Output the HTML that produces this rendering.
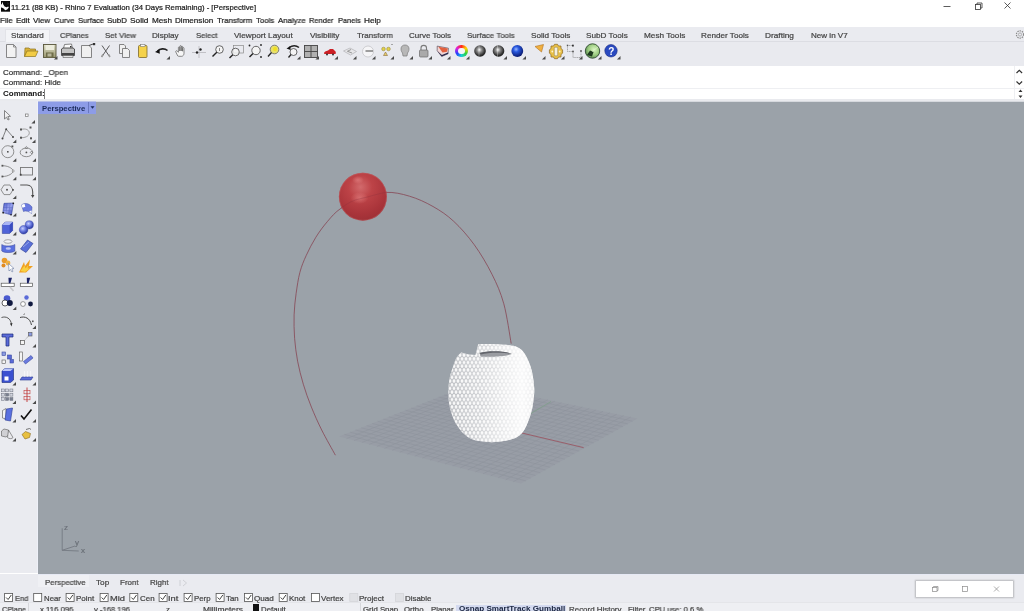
<!DOCTYPE html>
<html><head><meta charset="utf-8"><style>
html,body{margin:0;padding:0;}
body{width:1024px;height:611px;overflow:hidden;position:relative;background:#fff;font-family:"Liberation Sans",sans-serif;}
.t{position:absolute;white-space:nowrap;will-change:transform;-webkit-text-stroke:0.22px currentColor;}
svg{position:absolute;left:0;top:0;}
</style></head><body>
<div style="position:absolute;left:0px;top:0px;width:1024px;height:27px;background:#ffffff;"></div>
<div style="position:absolute;left:0px;top:27px;width:1024px;height:14px;background:#eaebf0;"></div>
<div style="position:absolute;left:0px;top:41px;width:1024px;height:1px;background:#dcdde3;"></div>
<div style="position:absolute;left:0px;top:42px;width:1024px;height:24px;background:#e9eaef;"></div>
<div style="position:absolute;left:0px;top:66px;width:1024px;height:22px;background:#ffffff;"></div>
<div style="position:absolute;left:0px;top:88px;width:1024px;height:1px;background:#eeeff2;"></div>
<div style="position:absolute;left:0px;top:89px;width:1024px;height:10px;background:#ffffff;"></div>
<div style="position:absolute;left:1014px;top:66px;width:1px;height:22px;background:#eeeff2;"></div>
<div style="position:absolute;left:1014px;top:89px;width:1px;height:10px;background:#eeeff2;"></div>
<div style="position:absolute;left:0px;top:101px;width:38px;height:472px;background:#eaebf0;"></div>
<div style="position:absolute;left:38px;top:101px;width:986px;height:473px;background:#9ba2a9;"></div>
<div style="position:absolute;left:0px;top:99px;width:1024px;height:2px;background:#e9eaee;"></div>
<div style="position:absolute;left:38px;top:101px;width:986px;height:1px;background:#d6d9de;"></div>
<div style="position:absolute;left:37px;top:101px;width:1px;height:472px;background:#eef0f8;"></div>
<div style="position:absolute;left:0px;top:574px;width:1024px;height:37px;background:#eaebf0;"></div>
<div style="position:absolute;left:38px;top:574px;width:986px;height:1px;background:#e6e9f4;"></div>
<div style="position:absolute;left:0px;top:602px;width:1024px;height:1px;background:#e4e5e9;"></div>
<div class="t" style="left:11.159151361621278px;top:4.17px;font-size:7.72px;line-height:7.72px;color:#222;transform:scaleX(1.0008);transform-origin:0 0;">11.21 (88 KB) - Rhino 7 Evaluation (34 Days Remaining) - [Perspective]</div>
<div class="t" style="left:0.3718120805369127px;top:17.33px;font-size:8px;line-height:8px;color:#222;transform:scaleX(0.9815);transform-origin:0 0;">File</div>
<div class="t" style="left:15.560975609756097px;top:17.33px;font-size:8px;line-height:8px;color:#222;transform:scaleX(0.9985);transform-origin:0 0;">Edit</div>
<div class="t" style="left:32.8px;top:17.33px;font-size:8px;line-height:8px;color:#222;transform:scaleX(0.9838);transform-origin:0 0;">View</div>
<div class="t" style="left:53.71673151750973px;top:17.33px;font-size:8px;line-height:8px;color:#222;transform:scaleX(0.9582);transform-origin:0 0;">Curve</div>
<div class="t" style="left:77.72089552238805px;top:17.33px;font-size:8px;line-height:8px;color:#222;transform:scaleX(0.9478);transform-origin:0 0;">Surface</div>
<div class="t" style="left:107.40165975103734px;top:17.33px;font-size:8px;line-height:8px;color:#222;transform:scaleX(0.9959);transform-origin:0 0;">SubD</div>
<div class="t" style="left:130.48530805687204px;top:17.33px;font-size:8px;line-height:8px;color:#222;transform:scaleX(1.0367);transform-origin:0 0;">Solid</div>
<div class="t" style="left:152.04608695652172px;top:17.33px;font-size:8px;line-height:8px;color:#222;transform:scaleX(1.0217);transform-origin:0 0;">Mesh</div>
<div class="t" style="left:175.35371179039302px;top:17.33px;font-size:8px;line-height:8px;color:#222;transform:scaleX(1.0098);transform-origin:0 0;">Dimension</div>
<div class="t" style="left:217.1436936936937px;top:17.33px;font-size:8px;line-height:8px;color:#222;transform:scaleX(0.9769);transform-origin:0 0;">Transform</div>
<div class="t" style="left:256.04473684210524px;top:17.33px;font-size:8px;line-height:8px;color:#222;transform:scaleX(0.9704);transform-origin:0 0;">Tools</div>
<div class="t" style="left:278.0px;top:17.33px;font-size:8px;line-height:8px;color:#222;transform:scaleX(0.9758);transform-origin:0 0;">Analyze</div>
<div class="t" style="left:309.3031347962382px;top:17.33px;font-size:8px;line-height:8px;color:#222;transform:scaleX(0.9326);transform-origin:0 0;">Render</div>
<div class="t" style="left:338.0061016949153px;top:17.33px;font-size:8px;line-height:8px;color:#222;transform:scaleX(0.9280);transform-origin:0 0;">Panels</div>
<div class="t" style="left:363.94020618556704px;top:17.33px;font-size:8px;line-height:8px;color:#222;transform:scaleX(1.0309);transform-origin:0 0;">Help</div>
<div style="position:absolute;left:5px;top:29px;width:45px;height:13px;background:#f3f4f7;box-shadow:inset 1px 1px 0 #e2e3e8,inset -1px 0 0 #e2e3e8;"></div>
<div class="t" style="left:10.695177664974619px;top:31.63px;font-size:8px;line-height:8px;color:#444;transform:scaleX(1.0121);transform-origin:0 0;">Standard</div>
<div class="t" style="left:59.62162162162162px;top:31.63px;font-size:8px;line-height:8px;color:#444;transform:scaleX(0.9459);transform-origin:0 0;">CPlanes</div>
<div class="t" style="left:105.10796915167096px;top:31.63px;font-size:8px;line-height:8px;color:#444;transform:scaleX(0.9801);transform-origin:0 0;">Set View</div>
<div class="t" style="left:152.35px;top:31.63px;font-size:8px;line-height:8px;color:#444;transform:scaleX(1.0156);transform-origin:0 0;">Display</div>
<div class="t" style="left:195.6139705882353px;top:31.63px;font-size:8px;line-height:8px;color:#444;transform:scaleX(0.9651);transform-origin:0 0;">Select</div>
<div class="t" style="left:234.4px;top:31.63px;font-size:8px;line-height:8px;color:#444;transform:scaleX(1.0259);transform-origin:0 0;">Viewport Layout</div>
<div class="t" style="left:309.9px;top:31.63px;font-size:8px;line-height:8px;color:#444;transform:scaleX(1.0202);transform-origin:0 0;">Visibility</div>
<div class="t" style="left:356.64144144144143px;top:31.63px;font-size:8px;line-height:8px;color:#444;transform:scaleX(0.9910);transform-origin:0 0;">Transform</div>
<div class="t" style="left:408.8003861003861px;top:31.63px;font-size:8px;line-height:8px;color:#444;transform:scaleX(0.9990);transform-origin:0 0;">Curve Tools</div>
<div class="t" style="left:467.2048657718121px;top:31.63px;font-size:8px;line-height:8px;color:#444;transform:scaleX(0.9878);transform-origin:0 0;">Surface Tools</div>
<div class="t" style="left:531.2917721518987px;top:31.63px;font-size:8px;line-height:8px;color:#444;transform:scaleX(1.0206);transform-origin:0 0;">Solid Tools</div>
<div class="t" style="left:585.9906374501992px;top:31.63px;font-size:8px;line-height:8px;color:#444;transform:scaleX(1.0234);transform-origin:0 0;">SubD Tools</div>
<div class="t" style="left:643.8444219066937px;top:31.63px;font-size:8px;line-height:8px;color:#444;transform:scaleX(1.0243);transform-origin:0 0;">Mesh Tools</div>
<div class="t" style="left:700.9486111111112px;top:31.63px;font-size:8px;line-height:8px;color:#444;transform:scaleX(1.0178);transform-origin:0 0;">Render Tools</div>
<div class="t" style="left:764.8380952380952px;top:31.63px;font-size:8px;line-height:8px;color:#444;transform:scaleX(1.0342);transform-origin:0 0;">Drafting</div>
<div class="t" style="left:810.8553047404063px;top:31.63px;font-size:8px;line-height:8px;color:#444;transform:scaleX(1.0073);transform-origin:0 0;">New in V7</div>
<div class="t" style="left:2.6024844720496896px;top:68.53px;font-size:8px;line-height:8px;color:#333;transform:scaleX(0.9938);transform-origin:0 0;">Command: _Open</div>
<div class="t" style="left:2.5981767180925663px;top:79.23px;font-size:8px;line-height:8px;color:#333;transform:scaleX(1.0046);transform-origin:0 0;">Command: Hide</div>
<div class="t" style="left:2.6825147347740668px;top:90.23px;font-size:8px;line-height:8px;color:#111;font-weight:bold;-webkit-text-stroke:0;transform:scaleX(0.9921);transform-origin:0 0;">Command:</div>
<div style="position:absolute;left:44px;top:89px;width:1px;height:10px;background:#808080;"></div>
<div style="position:absolute;left:38px;top:101px;width:58px;height:1px;background:#b8c0ea;"></div>
<div style="position:absolute;left:38px;top:102px;width:58px;height:12px;background:#8d9ce7;"></div>
<div class="t" style="left:42px;top:104.78px;font-size:7.7px;line-height:7.7px;color:#1a2a5a;font-weight:bold;-webkit-text-stroke:0;">Perspective</div>
<div style="position:absolute;left:88px;top:102px;width:1px;height:11px;background:#6a78c0;"></div>
<div style="position:absolute;left:38px;top:575px;width:51px;height:12px;background:#eff0f4;"></div>
<div class="t" style="left:45.075686274509806px;top:578.53px;font-size:8px;line-height:8px;color:#444;transform:scaleX(0.9755);transform-origin:0 0;">Perspective</div>
<div class="t" style="left:96.03589743589744px;top:578.53px;font-size:8px;line-height:8px;color:#444;transform:scaleX(1.0256);transform-origin:0 0;">Top</div>
<div class="t" style="left:120.16711111111111px;top:578.53px;font-size:8px;line-height:8px;color:#444;transform:scaleX(0.9889);transform-origin:0 0;">Front</div>
<div class="t" style="left:149.5671111111111px;top:578.53px;font-size:8px;line-height:8px;color:#444;transform:scaleX(0.9889);transform-origin:0 0;">Right</div>
<div style="position:absolute;left:455px;top:44.5px;width:12.8px;height:12.8px;border-radius:50%;background:conic-gradient(#ff2a1a,#ffd400 60deg,#2ad040 120deg,#18d0d0 180deg,#2040ff 240deg,#e020e0 300deg,#ff2a1a);"></div>
<div style="position:absolute;left:458px;top:47.5px;width:6.8px;height:6.8px;border-radius:50%;background:#f4f4f8;"></div>
<div class="t" style="left:63.5px;top:522.5px;font-size:8px;color:#6a6f77">z</div>
<div class="t" style="left:74.5px;top:538px;font-size:8px;color:#6a6f77">y</div>
<div class="t" style="left:80.5px;top:545.5px;font-size:8px;color:#6a6f77">x</div>
<div class="t" style="left:15.201226993865031px;top:595.30px;font-size:7.8px;line-height:7.8px;color:#444;transform:scaleX(0.9596);transform-origin:0 0;">End</div>
<div class="t" style="left:43.87391304347826px;top:595.30px;font-size:7.8px;line-height:7.8px;color:#444;transform:scaleX(1.0033);transform-origin:0 0;">Near</div>
<div class="t" style="left:76.1607305936073px;top:595.30px;font-size:7.8px;line-height:7.8px;color:#444;transform:scaleX(1.0245);transform-origin:0 0;">Point</div>
<div class="t" style="left:109.95442176870749px;top:595.30px;font-size:7.8px;line-height:7.8px;color:#444;transform:scaleX(1.1948);transform-origin:0 0;">Mid</div>
<div class="t" style="left:139.60174418604652px;top:595.30px;font-size:7.8px;line-height:7.8px;color:#444;transform:scaleX(1.0212);transform-origin:0 0;">Cen</div>
<div class="t" style="left:168.46237623762377px;top:595.30px;font-size:7.8px;line-height:7.8px;color:#444;transform:scaleX(1.1932);transform-origin:0 0;">Int</div>
<div class="t" style="left:194.076px;top:595.30px;font-size:7.8px;line-height:7.8px;color:#444;transform:scaleX(1.0000);transform-origin:0 0;">Perp</div>
<div class="t" style="left:225.84313725490196px;top:595.30px;font-size:7.8px;line-height:7.8px;color:#444;transform:scaleX(1.0055);transform-origin:0 0;">Tan</div>
<div class="t" style="left:253.89442060085838px;top:595.30px;font-size:7.8px;line-height:7.8px;color:#444;transform:scaleX(1.0399);transform-origin:0 0;">Quad</div>
<div class="t" style="left:289.16649746192894px;top:595.30px;font-size:7.8px;line-height:7.8px;color:#444;transform:scaleX(1.0152);transform-origin:0 0;">Knot</div>
<div class="t" style="left:321.0px;top:595.30px;font-size:7.8px;line-height:7.8px;color:#444;transform:scaleX(1.0229);transform-origin:0 0;">Vertex</div>
<div class="t" style="left:359.05629139072846px;top:595.30px;font-size:7.8px;line-height:7.8px;color:#444;transform:scaleX(1.0316);transform-origin:0 0;">Project</div>
<div class="t" style="left:405.3669781931464px;top:595.30px;font-size:7.8px;line-height:7.8px;color:#444;transform:scaleX(1.0145);transform-origin:0 0;">Disable</div>
<div style="position:absolute;left:0px;top:603px;width:1024px;height:8px;background:#eeeff3;"></div>
<div style="position:absolute;left:28px;top:603px;width:1px;height:8px;background:#d6d7db;"></div>
<div style="position:absolute;left:360px;top:603px;width:1px;height:8px;background:#d6d7db;"></div>
<div style="position:absolute;left:456px;top:604.5px;width:110px;height:6.5px;background:#d4daf0;"></div>
<div class="t" style="left:1.6336477987421383px;top:605.50px;font-size:7.8px;line-height:7.8px;color:#444;transform:scaleX(0.9394);transform-origin:0 0;">CPlane</div>
<div class="t" style="left:39.52276995305164px;top:605.50px;font-size:7.8px;line-height:7.8px;color:#444;transform:scaleX(0.9901);transform-origin:0 0;">x 116.096</div>
<div class="t" style="left:94.3px;top:605.50px;font-size:7.8px;line-height:7.8px;color:#444;transform:scaleX(0.9780);transform-origin:0 0;">y -168.196</div>
<div class="t" style="left:202.8301927194861px;top:605.50px;font-size:7.8px;line-height:7.8px;color:#444;transform:scaleX(1.0734);transform-origin:0 0;">Millimeters</div>
<div class="t" style="left:569.3653905053599px;top:605.50px;font-size:7.8px;line-height:7.8px;color:#444;transform:scaleX(1.0170);transform-origin:0 0;">Record History</div>
<div class="t" style="left:648.6194879089616px;top:605.50px;font-size:7.8px;line-height:7.8px;color:#444;transform:scaleX(0.9757);transform-origin:0 0;">CPU use: 0.6 %</div>
<div class="t" style="left:166px;top:605.50px;font-size:7.8px;line-height:7.8px;color:#444;">z</div>
<div class="t" style="left:261px;top:605.50px;font-size:7.8px;line-height:7.8px;color:#444;">Default</div>
<div class="t" style="left:363px;top:605.50px;font-size:7.8px;line-height:7.8px;color:#444;">Grid Snap</div>
<div class="t" style="left:404px;top:605.50px;font-size:7.8px;line-height:7.8px;color:#444;">Ortho</div>
<div class="t" style="left:431.4px;top:605.50px;font-size:7.8px;line-height:7.8px;color:#444;">Planar</div>
<div class="t" style="left:628px;top:605.50px;font-size:7.8px;line-height:7.8px;color:#444;">Filter</div>
<div style="position:absolute;left:253.3px;top:604px;width:6px;height:7px;background:#111;"></div>
<div class="t" style="left:458.6759415833974px;top:605.41px;font-size:7.9px;line-height:7.9px;color:#1a2540;font-weight:bold;-webkit-text-stroke:0;transform:scaleX(1.0255);transform-origin:0 0;">Osnap SmartTrack Gumball</div>
<div style="position:absolute;left:916px;top:581px;width:97px;height:16px;background:#fff;box-shadow:0 0 1.5px 0.8px rgba(0,0,0,0.22);"></div>
<svg width="1024" height="611" viewBox="0 0 1024 611">
<path d="M6.5 44.5H13.5L16 47V57.5H6.5Z" fill="#f2f2f2" stroke="#7a7a7a" stroke-width="0.9"/><path d="M13.5 44.5V47H16" fill="none" stroke="#7a7a7a" stroke-width="0.8"/>
<path d="M24.5 56.5L25 48H29L30 49H35.5V51" fill="#d9b23a" stroke="#8c7420" stroke-width="0.7"/><path d="M24.5 56.5L27 51H38L35.5 56.5Z" fill="#f2cc45" stroke="#8c7420" stroke-width="0.7"/>
<defs><linearGradient id="flp" x1="0" y1="0" x2="0" y2="1"><stop offset="0" stop-color="#dcdcc4"/><stop offset="1" stop-color="#9a9870"/></linearGradient></defs><rect x="43.5" y="44.5" width="12.5" height="13" fill="url(#flp)" stroke="#58563a" stroke-width="0.9"/><rect x="45.5" y="45" width="8.5" height="5" fill="#ececdc"/><rect x="46" y="52.5" width="7.5" height="5" fill="#6e6c48"/><rect x="47.5" y="53.5" width="4" height="3" fill="#b8b69a"/>
<path d="M57.5 55.9L57.5 59.5L53.9 59.5Z" fill="#4a4a4a"/>
<path d="M64.5 44.5L71.5 44L72.5 48.5H63.5Z" fill="#fafafa" stroke="#555" stroke-width="0.7"/><path d="M61.5 49L63 48H73L74.5 49V55.5H61.5Z" fill="#c4c4c4" stroke="#333" stroke-width="0.8"/><rect x="62" y="53" width="12" height="2.5" fill="#444"/><path d="M63 55.5H73V57.5H63Z" fill="#e4e4e4" stroke="#555" stroke-width="0.6"/><rect x="70" y="46" width="1.5" height="1.5" fill="#333"/>
<path d="M81.5 45.5H89L91.5 48V57.5H81.5Z" fill="#f0f0f0" stroke="#6a6a6a" stroke-width="0.8"/><path d="M89 45.5L94.5 43.5" stroke="#444" stroke-width="1"/><rect x="93" y="43" width="2.2" height="2.2" fill="#333"/>
<path d="M102 45.5L109.5 56.5M109.5 45.5L102 56.5" stroke="#5a5a5a" stroke-width="1" fill="none"/><path d="M101.5 57L103 54.5M110 57L108.5 54.5" stroke="#999" stroke-width="1.6"/>
<path d="M119.5 44.5H124L125.5 46V53.5H119.5Z" fill="#f0f0f0" stroke="#6a6a6a" stroke-width="0.8"/><path d="M122.5 48.5H127.5L129.5 50.5V57.5H122.5Z" fill="#f0f0f0" stroke="#6a6a6a" stroke-width="0.8"/>
<rect x="138.5" y="45.5" width="8.5" height="12" rx="1" fill="#f5d24a" stroke="#7e6a2a" stroke-width="0.8"/><rect x="140.5" y="44.5" width="4.5" height="2" fill="#fafafa" stroke="#777" stroke-width="0.6"/>
<path d="M157.5 51C160 48.5 164.5 48 167.5 50.5" stroke="#222" stroke-width="1.6" fill="none"/><path d="M155 52L159.5 49.2L159.8 53.8Z" fill="#111"/>
<path d="M170 55.9L170 59.5L166.4 59.5Z" fill="#4a4a4a"/>
<path d="M177.8 56L175.8 52C175.3 51 176.6 50.2 177.4 51.1L178.4 52.3V47.6C178.4 46.6 179.8 46.6 179.8 47.6V51V46.4C179.8 45.4 181.2 45.4 181.2 46.4V51V46.9C181.2 45.9 182.6 45.9 182.6 46.9V51.2V48.3C182.6 47.3 184 47.3 184 48.3V53.2C184 55 183 56.1 181.8 56.3H178.6Z" fill="#f6f6f6" stroke="#5a5a5a" stroke-width="0.7" stroke-linejoin="round"/>
<path d="M192 52.5H206M199 46V58" stroke="#b6b6bb" stroke-width="0.8" fill="none"/><circle cx="197" cy="52.5" r="1.2" fill="#222"/><circle cx="200.5" cy="49.5" r="1.2" fill="#222"/>
<circle cx="219.5" cy="49.5" r="3.8" fill="#f4f4f4" stroke="#444" stroke-width="0.8"/><path d="M216.8 52.3L212.5 56.5" stroke="#222" stroke-width="1.4"/><path d="M219.5 48V51" stroke="#555" stroke-width="0.7"/>
<rect x="233.5" y="45.5" width="10" height="7.5" fill="none" stroke="#8a8a8a" stroke-width="0.7"/><circle cx="235.5" cy="52" r="3.8" fill="#f4f4f4" fill-opacity="0.8" stroke="#444" stroke-width="0.8"/><path d="M232.8 54.8L229.5 58" stroke="#222" stroke-width="1.4"/>
<circle cx="256" cy="50.5" r="4.2" fill="#f4f4f4" stroke="#444" stroke-width="0.8"/><path d="M253 53.5L249.5 57" stroke="#222" stroke-width="1.4"/><circle cx="249.5" cy="45.5" r="0.9" fill="#222"/><circle cx="261" cy="45" r="0.9" fill="#222"/><circle cx="261" cy="57" r="0.9" fill="#222"/>
<circle cx="274.5" cy="49.5" r="4.3" fill="#e8e06a" stroke="#666" stroke-width="0.8"/><circle cx="275" cy="49" r="2" fill="#f0e020"/><path d="M271.5 52.5L268 56.5" stroke="#222" stroke-width="1.4"/>
<circle cx="293.5" cy="52" r="3.5" fill="#f4f4f4" stroke="#444" stroke-width="0.8"/><path d="M291 54.5L288.5 57.5" stroke="#222" stroke-width="1.3"/><path d="M289 47.5C292 45.5 296 45 299 47.5" stroke="#222" stroke-width="1.5" fill="none"/><path d="M286.5 48.5L290.5 46L290.5 50Z" fill="#111"/>
<path d="M300.5 55.9L300.5 59.5L296.9 59.5Z" fill="#4a4a4a"/>
<rect x="304.5" y="45.5" width="13" height="12" fill="#b0b0b0" stroke="#444" stroke-width="0.9"/><path d="M311 45.5V57.5M304.5 51.5H317.5" stroke="#444" stroke-width="0.9"/>
<path d="M319 55.9L319 59.5L315.4 59.5Z" fill="#4a4a4a"/>
<path d="M324 53.5C324 51.5 326 51 328 50.5L330 49H333L335 51C336 51.5 336 53 335.5 54H324.5Z" fill="#cc1f25"/><circle cx="327" cy="54.5" r="1" fill="#333"/><circle cx="333" cy="54.5" r="1" fill="#333"/>
<path d="M338 55.9L338 59.5L334.4 59.5Z" fill="#4a4a4a"/>
<path d="M343.5 51L350 48L356.5 51.5L350.5 55Z" fill="#e6e6e8" stroke="#b2b2b6" stroke-width="0.7"/><path d="M347 51.5L351 49.5M348 51.5L352 53" stroke="#777" stroke-width="0.7"/>
<path d="M356.5 55.9L356.5 59.5L352.9 59.5Z" fill="#4a4a4a"/>
<circle cx="368" cy="51.5" r="5.5" fill="#f5f5f7" stroke="#c4c4c8" stroke-width="0.8"/><path d="M365.5 51H373" stroke="#555" stroke-width="1.1"/>
<path d="M375.5 55.9L375.5 59.5L371.9 59.5Z" fill="#4a4a4a"/>
<circle cx="383.5" cy="49" r="1.8" fill="#e2d24a" stroke="#8a7a2a" stroke-width="0.5"/><circle cx="388.5" cy="49" r="1.8" fill="#e2d24a" stroke="#8a7a2a" stroke-width="0.5"/><path d="M385.5 52L383.5 55.5H387.5Z" fill="#e6cf6a" stroke="#8a6a3a" stroke-width="0.6"/><path d="M391 44.5H393" stroke="#777" stroke-width="0.6"/>
<path d="M394 55.9L394 59.5L390.4 59.5Z" fill="#4a4a4a"/>
<path d="M402.5 53C400 50 400.5 45 405 45S410 50 407.5 53L407 56H403Z" fill="#b8b8b8" stroke="#7a7a7a" stroke-width="0.7"/>
<path d="M413 55.9L413 59.5L409.4 59.5Z" fill="#4a4a4a"/>
<path d="M421 50V48C421 44.5 426.5 44.5 426.5 48V50" stroke="#7a7a7a" stroke-width="1.1" fill="none"/><rect x="419.5" y="50" width="8.5" height="7" rx="1" fill="#aaa" stroke="#6a6a6a" stroke-width="0.7"/>
<path d="M432 55.9L432 59.5L428.4 59.5Z" fill="#4a4a4a"/>
<path d="M437.2 46.1L448.4 48.2L448.1 53.8L441.7 56.4L437.2 50.8Z" fill="#f2d6d6" stroke="#4a3a48" stroke-width="0.6"/><path d="M438.4 46.7L447.8 48.5L447 51.7L442.5 52.6Z" fill="#e2603e"/><path d="M437.6 51.2L441.9 55L448 52.6L448.1 53.8L441.7 56.4L437.2 50.8Z" fill="#26264a"/>
<path d="M450.5 55.9L450.5 59.5L446.9 59.5Z" fill="#4a4a4a"/>
<path d="M469.5 55.9L469.5 59.5L465.9 59.5Z" fill="#4a4a4a"/>
<defs><radialGradient id="gsp" cx="0.45" cy="0.4" r="0.6"><stop offset="0" stop-color="#f4f4f4"/><stop offset="0.35" stop-color="#8a8a8a"/><stop offset="0.8" stop-color="#303030"/><stop offset="1" stop-color="#1a1a1a"/></radialGradient><radialGradient id="bsp" cx="0.4" cy="0.35" r="0.65"><stop offset="0" stop-color="#9ab8ff"/><stop offset="0.35" stop-color="#2a5ae0"/><stop offset="1" stop-color="#0a1a70"/></radialGradient></defs>
<circle cx="480" cy="51" r="5.8" fill="url(#gsp)"/><path d="M479 45.5V56.5" stroke="#fff" stroke-width="0.5" opacity="0.6"/>
<circle cx="498.5" cy="51" r="5.8" fill="url(#gsp)"/><path d="M497.5 45.5V56.5" stroke="#fff" stroke-width="0.5" opacity="0.6"/>
<path d="M507 55.9L507 59.5L503.4 59.5Z" fill="#4a4a4a"/>
<circle cx="517.3" cy="51" r="5.9" fill="url(#bsp)"/>
<path d="M526 55.9L526 59.5L522.4 59.5Z" fill="#4a4a4a"/>
<path d="M535 46.5L543.5 44.5L541.5 52Z" fill="#f0b040" stroke="#b07020" stroke-width="0.6"/>
<path d="M545.5 55.9L545.5 59.5L541.9 59.5Z" fill="#4a4a4a"/>
<path d="M551 46H553.5L554.5 44.3H557.5L558.5 46H561V48.5L562.6 49.8V53.2L561 54.5V57H558.5L557.5 58.7H554.5L553.5 57H551V54.5L549.4 53.2V49.8L551 48.5Z" fill="#e8c048" stroke="#8a6420" stroke-width="0.7"/><rect x="554.3" y="47.3" width="3.4" height="8.5" rx="0.8" fill="#f4f0e0" stroke="#8a7a50" stroke-width="0.5"/><circle cx="552.3" cy="51.5" r="0.9" fill="#fff6d0"/><circle cx="559.7" cy="51.5" r="0.9" fill="#fff6d0"/>
<path d="M564.5 55.9L564.5 59.5L560.9 59.5Z" fill="#4a4a4a"/>
<path d="M567.5 45.5V51.5H573V57.5H581M567 45.5H572.5M581 50.5V57.5" stroke="#8a8a8a" stroke-width="0.7" fill="none" stroke-dasharray="1.2 0.6"/><rect x="572" y="44.7" width="1.8" height="1.8" fill="#333"/><circle cx="573" cy="51.5" r="0.9" fill="#555"/><circle cx="581" cy="51" r="0.9" fill="#555"/><rect x="566.8" y="44.7" width="1.4" height="1.4" fill="#555"/>
<path d="M582.5 55.9L582.5 59.5L578.9 59.5Z" fill="#4a4a4a"/>
<defs><radialGradient id="grn" cx="0.6" cy="0.4" r="0.7"><stop offset="0" stop-color="#d8f4c0"/><stop offset="0.55" stop-color="#9ccc80"/><stop offset="1" stop-color="#4a7a44"/></radialGradient></defs>
<circle cx="592.5" cy="51" r="7.2" fill="url(#grn)" stroke="#2e4a2e" stroke-width="0.9"/><path d="M587 55L590 50.5L593.5 52L592 56.5Z" fill="#1e3a1e"/><path d="M592 51.5L598 47" stroke="#e8f8d8" stroke-width="0.8" opacity="0.7"/>
<path d="M601.5 55.9L601.5 59.5L597.9 59.5Z" fill="#4a4a4a"/>
<circle cx="611" cy="50.8" r="6.2" fill="#2a4ac0" stroke="#1a2a80" stroke-width="0.6"/>
<text x="608.3" y="54.6" font-family="Liberation Sans" font-weight="bold" font-size="10" fill="#fff">?</text>
<path d="M620.5 55.9L620.5 59.5L616.9 59.5Z" fill="#4a4a4a"/>
<circle cx="1020" cy="34.5" r="3.6" fill="none" stroke="#8a8a8a" stroke-width="1.2" stroke-dasharray="1.4 0.9"/><circle cx="1020" cy="34.5" r="1.6" fill="none" stroke="#8a8a8a" stroke-width="0.6"/>
<rect x="1" y="1" width="9" height="10.7" fill="#0a0a0a"/><path d="M0 4.8L1.8 4.2L2.3 1.8L3.4 4.8L4.6 6.6L6.5 7.3L8.2 6.6L8.8 7.6L7.2 9.6L5.2 10.3L3.6 8.6L1.6 7.6L0 7.8Z" fill="#fafafa"/><path d="M7.5 2.8L8.2 3.2L7.8 4.6" stroke="#555" stroke-width="0.5" fill="none"/>
<path d="M943.5 6.5H950.5" stroke="#333" stroke-width="0.8"/><rect x="975.5" y="4.5" width="5" height="5" fill="none" stroke="#333" stroke-width="0.8"/><path d="M977 4.5V3H982V8H980.5" fill="none" stroke="#333" stroke-width="0.8"/><path d="M1004.5 2.5L1010.5 8.5M1010.5 2.5L1004.5 8.5" stroke="#333" stroke-width="0.8"/>
<path d="M1016.5 73L1019.3 70.3L1022.1 73M1016.5 81.5L1019.3 84.2L1022.1 81.5" stroke="#333" stroke-width="1.2" fill="none"/><path d="M1020.5 89.5L1022.5 92H1018.5Z M1018.5 95.5H1022.5L1020.5 98Z" fill="#333"/>
<path d="M4.5 110.5V119L6.5 117.2L8 120L9.2 119.4L7.8 116.6L10.5 116.3Z" fill="#f0f0f2" stroke="#6a6a6a" stroke-width="0.8"/>
<rect x="25.5" y="114" width="2.6" height="2.6" fill="#fff" stroke="#777" stroke-width="0.7"/>
<path d="M35 120.0L35 123.6L31.4 123.6Z" fill="#4a4a4a"/>
<path d="M2.5 138.5L6.2 129.2L13 137" stroke="#666" stroke-width="0.8" fill="none"/><circle cx="2.5" cy="138.5" r="1" fill="#444"/><circle cx="6.2" cy="129.2" r="1" fill="#444"/><circle cx="13" cy="137" r="1" fill="#444"/>
<path d="M16.3 139.4L16.3 143L12.700000000000001 143Z" fill="#4a4a4a"/>
<path d="M21 129.5C31 126.5 33 138 21 137.7" stroke="#888" stroke-width="0.8" fill="none"/><rect x="20" y="128.5" width="2" height="2" fill="#555"/><rect x="29.5" y="126.5" width="2" height="2" fill="#555"/><rect x="20" y="136.7" width="2" height="2" fill="#555"/><rect x="30" y="137.3" width="2" height="2" fill="#555"/>
<path d="M35.5 139.4L35.5 143L31.9 143Z" fill="#4a4a4a"/>
<circle cx="7.8" cy="151.7" r="6" fill="none" stroke="#777" stroke-width="0.8"/><rect x="7" y="151" width="1.6" height="1.6" fill="#555"/><rect x="11.5" y="145.5" width="1.8" height="1.8" fill="#555"/>
<path d="M16.3 158.20000000000002L16.3 161.8L12.700000000000001 161.8Z" fill="#4a4a4a"/>
<ellipse cx="26.4" cy="152.4" rx="6.2" ry="4.3" fill="none" stroke="#777" stroke-width="0.8"/><circle cx="26.4" cy="152.4" r="0.9" fill="#555"/><path d="M26.4 146.5L27.6 147.7L26.4 148.9L25.2 147.7Z" fill="none" stroke="#555" stroke-width="0.6"/><path d="M31.5 151.2L32.7 152.4L31.5 153.6L30.3 152.4Z" fill="none" stroke="#555" stroke-width="0.6"/>
<path d="M36 158.20000000000002L36 161.8L32.4 161.8Z" fill="#4a4a4a"/>
<path d="M2.3 165.7C10 165.7 13.5 170 13.2 171C13 173 9 176.5 2.3 176.5" stroke="#777" stroke-width="0.8" fill="none"/><rect x="1.5" y="164.8" width="1.8" height="1.8" fill="#555"/><rect x="1.5" y="175.6" width="1.8" height="1.8" fill="#555"/><circle cx="13.2" cy="171" r="1" fill="#fff" stroke="#555" stroke-width="0.5"/>
<path d="M16.3 176.70000000000002L16.3 180.3L12.700000000000001 180.3Z" fill="#4a4a4a"/>
<rect x="20.5" y="167.5" width="12" height="7.5" fill="none" stroke="#777" stroke-width="0.9"/><rect x="19.8" y="173.8" width="1.8" height="1.8" fill="#444"/>
<path d="M36 176.70000000000002L36 180.3L32.4 180.3Z" fill="#4a4a4a"/>
<path d="M4 185L10 185L13 189.8L10 194.6H4L1 189.8Z" fill="none" stroke="#777" stroke-width="0.8"/><circle cx="7" cy="189.8" r="1" fill="#555"/><rect x="12" y="189" width="1.8" height="1.8" fill="#555"/>
<path d="M16.3 195.4L16.3 199L12.700000000000001 199Z" fill="#4a4a4a"/>
<path d="M20.2 185H27C30.5 185 32.7 188 32.7 192V196" stroke="#555" stroke-width="1.1" fill="none"/><path d="M31 195L32.7 198L34.4 195Z" fill="#444"/>
<defs><linearGradient id="bl" x1="0" y1="0" x2="1" y2="1"><stop offset="0" stop-color="#4a5ac8"/><stop offset="0.5" stop-color="#9aa4ee"/><stop offset="1" stop-color="#3a4ab8"/></linearGradient><radialGradient id="bsph" cx="0.4" cy="0.35" r="0.65"><stop offset="0" stop-color="#c8d0ff"/><stop offset="0.5" stop-color="#6a7ae0"/><stop offset="1" stop-color="#2a38a0"/></radialGradient></defs>
<path d="M4 203.3L13.5 203L11.5 215L2.8 212.5Z" fill="url(#bl)" stroke="#2a3a90" stroke-width="0.5"/><path d="M7 203.2L6 213.5M10.2 203.1L8.8 214.2M3.5 207.5L12.7 207.7M3.1 210.3L12.2 211" stroke="#3a4ab0" stroke-width="0.45" opacity="0.7"/><circle cx="3.2" cy="212.7" r="0.9" fill="#222"/><circle cx="13.3" cy="203.3" r="0.9" fill="#222"/><circle cx="11" cy="214.8" r="0.8" fill="#222"/>
<path d="M16.3 213.0L16.3 216.6L12.700000000000001 216.6Z" fill="#4a4a4a"/>
<path d="M21.5 205C24.5 202.5 29 203 32 207L31.5 213.5C29 211 25.5 210.5 23.5 211.5Z" fill="#6a7ae0" stroke="#3a4aa0" stroke-width="0.5"/><path d="M21.5 205L24.5 203.8L25.3 206.8L22.5 207.8Z" fill="#fff"/><path d="M29 211.3L31.5 213.5L31.7 210.5Z" fill="#fff"/>
<path d="M36 213.0L36 216.6L32.4 216.6Z" fill="#4a4a4a"/>
<path d="M2.3 225L5.3 222H12.6V230.5L9.6 233.5H2.3Z" fill="#4e62d8" stroke="#2a3a90" stroke-width="0.5"/><path d="M2.3 225L5.3 222H12.6L9.6 225Z" fill="#a8b4f4"/><path d="M9.6 225L12.6 222V230.5L9.6 233.5Z" fill="#3a4cc0"/>
<path d="M16.3 231.8L16.3 235.4L12.700000000000001 235.4Z" fill="#4a4a4a"/>
<circle cx="29.3" cy="224.8" r="4.1" fill="url(#bsph)" stroke="#2a3aa0" stroke-width="0.4"/><circle cx="23.6" cy="229.8" r="4.3" fill="url(#bsph)" stroke="#2a3aa0" stroke-width="0.4"/>
<path d="M36 231.8L36 235.4L32.4 235.4Z" fill="#4a4a4a"/>
<ellipse cx="8" cy="241.5" rx="4" ry="1.8" fill="#f4f4f8" stroke="#777" stroke-width="0.6"/><path d="M1.8 244.5V251C4 253 12 253 14.8 251V244.5C12 246.5 4 246.5 1.8 244.5Z" fill="#5a70e0" stroke="#3a4aa0" stroke-width="0.6"/><ellipse cx="8.3" cy="248.5" rx="2.6" ry="1.2" fill="#c0c8f4"/>
<path d="M16.3 250.9L16.3 254.5L12.700000000000001 254.5Z" fill="#4a4a4a"/>
<path d="M20.5 249L27.5 240L33 243.5L26 252.5Z" fill="#5a70d8" stroke="#2a3a90" stroke-width="0.6"/><path d="M23 247L29 242" stroke="#c0c8f4" stroke-width="0.6"/>
<path d="M36 250.9L36 254.5L32.4 254.5Z" fill="#4a4a4a"/>
<circle cx="4.5" cy="260.5" r="2.8" fill="#e89a2a"/><circle cx="8" cy="263" r="2.4" fill="#f0b040"/><circle cx="3.5" cy="265.5" r="2" fill="#e08a20"/><path d="M8.5 263.5L9 271L10.5 269.5L12 272L13 271.3L11.8 268.8L14 268.5Z" fill="#fff" stroke="#6a7aa0" stroke-width="0.6"/>
<path d="M19 272.5L24 262L25 266L30 259.5L29 266L33 266L26 272.5Z" fill="#f0a020"/><path d="M20.5 271L24.5 265.5L25.5 268.5L28.5 265L27.5 268.5L30 268.5L25 272Z" fill="#f8d040"/>
<rect x="1.2" y="283.2" width="13" height="3.2" fill="#fff" stroke="#555" stroke-width="0.7"/><path d="M8.4 277.8H12L10.4 283.2H8.8Z" fill="#1a2266"/><path d="M10 287L13.5 291" stroke="#c8c8cc" stroke-width="1.6"/>
<rect x="20.3" y="283.2" width="12.2" height="3.2" fill="#fff" stroke="#555" stroke-width="0.7"/><path d="M26.8 277.8H30.2L28.6 283.2H27Z" fill="#1a2266"/>
<circle cx="7" cy="298.5" r="3.3" fill="#4a5ad0"/><circle cx="5" cy="303" r="3" fill="#fff" stroke="#222" stroke-width="0.7"/><circle cx="9.8" cy="303" r="3" fill="#111a40"/>
<path d="M16.3 306.4L16.3 310L12.700000000000001 310Z" fill="#4a4a4a"/>
<circle cx="26.5" cy="297.5" r="2.2" fill="#5a6ad8"/><circle cx="23" cy="304" r="2.4" fill="#fff" stroke="#555" stroke-width="0.6"/><circle cx="30.5" cy="304" r="2.4" fill="#111a40"/>
<path d="M1.5 317.5C6 316 11 318 11.5 325" stroke="#333" stroke-width="0.8" fill="none"/><path d="M10 323.5L11.5 326.5L12.5 323" fill="#333"/>
<path d="M20 317.5C25 316 30 318 31.5 325" stroke="#444" stroke-width="1" fill="none"/><path d="M23.5 314.5L25 313.8" stroke="#555" stroke-width="0.8"/><rect x="32" y="320.5" width="1.6" height="1.6" fill="#555"/>
<path d="M36 325.4L36 329L32.4 329Z" fill="#4a4a4a"/>
<path d="M2 334H13V337H9V346H6V337H2Z" fill="#5a6ad8" stroke="#1a2a7a" stroke-width="0.7"/>
<rect x="20.5" y="340.5" width="4" height="4" fill="#f4f4f4" stroke="#555" stroke-width="0.7"/><rect x="28.5" y="332.5" width="3.5" height="3.5" fill="#8a9ae0" stroke="#555" stroke-width="0.6"/><path d="M24.5 340.5L28.5 336" stroke="#777" stroke-width="0.6" stroke-dasharray="1 0.7"/>
<path d="M36 343.9L36 347.5L32.4 347.5Z" fill="#4a4a4a"/>
<rect x="2" y="352" width="3.5" height="3.5" fill="#8a9ae0" stroke="#3a4aa0" stroke-width="0.6"/><rect x="7.5" y="355" width="4" height="4" fill="#5a6ad8" stroke="#3a4aa0" stroke-width="0.6"/><rect x="10" y="359.5" width="3.5" height="3.5" fill="#5a6ad8" stroke="#3a4aa0" stroke-width="0.6"/><rect x="2" y="360" width="3.5" height="3.5" fill="#f4f4f4" stroke="#555" stroke-width="0.6"/>
<rect x="19.5" y="352" width="3" height="9" fill="#f4f4f4" stroke="#555" stroke-width="0.6"/><path d="M23.5 361.5L31 355.5L33 358L25.5 364Z" fill="#6a7ae0" stroke="#3a4aa0" stroke-width="0.6"/>
<path d="M2 371L5 368.5H13.5V380L10.5 382.5H2Z" fill="#3a50d0" stroke="#1a2a7a" stroke-width="0.6"/><path d="M2 371L5 368.5H13.5L10.5 371Z" fill="#b8c4f8"/><rect x="4.5" y="376.5" width="4" height="4" fill="#fff"/>
<path d="M16 381.9L16 385.5L12.4 385.5Z" fill="#4a4a4a"/>
<path d="M20 380L22 377H33L31 380Z" fill="#5a6ad8" stroke="#2a3a90" stroke-width="0.6"/><path d="M24.5 376.5V371M27.5 376.5V371M30.5 376.5V371" stroke="#f4f4f8" stroke-width="1"/>
<path d="M36 381.9L36 385.5L32.4 385.5Z" fill="#4a4a4a"/>
<rect x="1.5" y="389.0" width="3" height="2.8" fill="#d4d7e0" stroke="#6a6f7c" stroke-width="0.5"/><rect x="1.5" y="393.3" width="3" height="2.8" fill="#d4d7e0" stroke="#6a6f7c" stroke-width="0.5"/><rect x="1.5" y="397.6" width="3" height="2.8" fill="#d4d7e0" stroke="#6a6f7c" stroke-width="0.5"/><rect x="5.7" y="389.0" width="3" height="2.8" fill="#d4d7e0" stroke="#6a6f7c" stroke-width="0.5"/><rect x="5.7" y="393.3" width="3" height="2.8" fill="#7a8090" stroke="#6a6f7c" stroke-width="0.5"/><rect x="5.7" y="397.6" width="3" height="2.8" fill="#7a8090" stroke="#6a6f7c" stroke-width="0.5"/><rect x="9.9" y="389.0" width="3" height="2.8" fill="#d4d7e0" stroke="#6a6f7c" stroke-width="0.5"/><rect x="9.9" y="393.3" width="3" height="2.8" fill="#d4d7e0" stroke="#6a6f7c" stroke-width="0.5"/><rect x="9.9" y="397.6" width="3" height="2.8" fill="#7a8090" stroke="#6a6f7c" stroke-width="0.5"/>
<path d="M16 400.4L16 404L12.4 404Z" fill="#4a4a4a"/>
<path d="M27 387.5V402" stroke="#c03a3a" stroke-width="0.9"/><rect x="24" y="390.5" width="6" height="3.3" fill="none" stroke="#c03a3a" stroke-width="0.6"/><rect x="24" y="396.5" width="6" height="3.3" fill="none" stroke="#c03a3a" stroke-width="0.6"/>
<path d="M36 400.4L36 404L32.4 404Z" fill="#4a4a4a"/>
<path d="M2.5 410.5L6 408.5V419L2.5 418Z" fill="#f4f4f4" stroke="#555" stroke-width="0.6"/><path d="M6.5 409L12.5 408L10.5 421L5 420Z" fill="#5a70e0" stroke="#2a3a90" stroke-width="0.6"/>
<path d="M16 418.9L16 422.5L12.4 422.5Z" fill="#4a4a4a"/>
<path d="M21 415.5L24 419L31.5 409.5" stroke="#111" stroke-width="1.6" fill="none"/>
<path d="M36 418.9L36 422.5L32.4 422.5Z" fill="#4a4a4a"/>
<path d="M1.5 431L4 429L8.5 430V435L6 437L1.5 436Z" fill="#d0d0d4" stroke="#555" stroke-width="0.6"/><path d="M8.5 430L13 437.5C12 439 9 439 7.5 437.5Z" fill="#e8e8ec" stroke="#555" stroke-width="0.6"/>
<path d="M16 437.9L16 441.5L12.4 441.5Z" fill="#4a4a4a"/>
<path d="M22 434.5L25.5 431.5L30.5 433.5L29.5 437.5L25 439Z" fill="#e8c040" stroke="#8a6a20" stroke-width="0.6"/><path d="M26 429.5L29.5 428.5L31 429.5" stroke="#555" stroke-width="0.8" fill="none"/>
<path d="M36 437.9L36 441.5L32.4 441.5Z" fill="#4a4a4a"/>
<polygon points="339,436.6 472,384 637.5,418.5 521,483.6" fill="#989da6"/>
<path d="M344.5 434.4L525.9 480.9M346.6 438.6L478.9 385.4M350.1 432.2L530.7 478.2M354.2 440.5L485.8 386.9M355.6 430.0L535.6 475.5M361.8 442.5L492.7 388.3M361.2 427.8L540.4 472.8M369.3 444.4L499.6 389.8M366.7 425.6L545.3 470.0M376.9 446.4L506.5 391.2M372.2 423.5L550.1 467.3M384.5 448.4L513.4 392.6M377.8 421.3L555.0 464.6M392.1 450.3L520.3 394.1M383.3 419.1L559.8 461.9M399.7 452.3L527.2 395.5M388.9 416.9L564.7 459.2M407.2 454.2L534.1 396.9M394.4 414.7L569.5 456.5M414.8 456.2L541.0 398.4M400.0 412.5L574.4 453.8M422.4 458.1L547.9 399.8M405.5 410.3L579.2 451.1M430.0 460.1L554.8 401.2M411.0 408.1L584.1 448.3M437.6 462.1L561.6 402.7M416.6 405.9L589.0 445.6M445.2 464.0L568.5 404.1M422.1 403.7L593.8 442.9M452.8 466.0L575.4 405.6M427.7 401.5L598.7 440.2M460.3 467.9L582.3 407.0M433.2 399.3L603.5 437.5M467.9 469.9L589.2 408.4M438.8 397.1L608.4 434.8M475.5 471.9L596.1 409.9M444.3 395.0L613.2 432.1M483.1 473.8L603.0 411.3M449.8 392.8L618.1 429.4M490.7 475.8L609.9 412.8M455.4 390.6L622.9 426.6M498.2 477.7L616.8 414.2M460.9 388.4L627.8 423.9M505.8 479.7L623.7 415.6M466.5 386.2L632.6 421.2M513.4 481.6L630.6 417.1" stroke="#8e939c" stroke-width="0.55" fill="none"/>
<path d="M505 429L583.6 447.6" stroke="#9a4f5c" stroke-width="0.8"/>
<path d="M505 429L551 401.5" stroke="#7fa08a" stroke-width="0.8"/>
<defs><radialGradient id="sph" cx="0.45" cy="0.3" r="0.7"><stop offset="0" stop-color="#d26a6c"/><stop offset="0.35" stop-color="#bd4347"/><stop offset="0.8" stop-color="#a9343a"/><stop offset="1" stop-color="#9f3036"/></radialGradient><radialGradient id="sph2" cx="0.5" cy="0.5" r="0.5"><stop offset="0" stop-color="#e88a8a" stop-opacity="0.55"/><stop offset="1" stop-color="#e88a8a" stop-opacity="0"/></radialGradient></defs>
<path d="M335.4 455.2C333.1 451.0 325.7 438.0 321.7 430C317.7 422.0 314.5 414.7 311.4 407.1C308.3 399.5 305.6 391.9 303.3 384.2C301.0 376.5 299.1 368.8 297.6 361.2C296.2 353.6 295.2 346.0 294.6 338.3C294.0 330.6 293.9 322.3 294.1 314.9C294.4 307.4 295.1 300.7 296.1 293.6C297.1 286.5 298.2 278.7 299.9 272.3C301.6 265.9 303.6 261.2 306.3 255.3C309.0 249.5 312.3 242.9 315.9 237.2C319.4 231.5 323.5 226.1 327.6 221.3C331.7 216.5 335.1 212.3 340.7 208.5C346.3 204.7 353.5 201.2 361 198.5C368.5 195.8 377.8 192.8 385.9 192.4C394.0 192.0 401.6 193.8 409.5 196.2C417.4 198.5 425.6 202.3 433 206.5C440.4 210.7 446.8 214.9 453.7 221.3C460.6 227.7 467.9 236.0 474.3 244.8C480.7 253.6 487.1 264.5 492 274.3C496.9 284.1 500.6 292.2 503.8 303.8C507.0 315.4 510.0 337.0 511.2 343.6" stroke="#86404f" stroke-width="0.75" fill="none"/>
<circle cx="362.9" cy="196.7" r="24" fill="url(#sph)"/>
<ellipse cx="359.5" cy="198" rx="9" ry="6" fill="url(#sph2)"/>
<ellipse cx="358" cy="180" rx="6" ry="4" fill="url(#sph2)"/>
<circle cx="362.9" cy="196.7" r="23.6" fill="none" stroke="#c06a6c" stroke-width="0.7" opacity="0.6"/>
<path d="M340.7 208.5C347 203.5 353 200 361 198.5S378 193.5 385.9 192.4" stroke="#8a2f3c" stroke-width="0.7" fill="none" opacity="0.45"/>
<defs><pattern id="holes" width="4" height="7.4" patternUnits="userSpaceOnUse" patternTransform="translate(448 344)"><path d="M0.80 3.21L3.20 3.21L2.00 0.99ZM2.80 0.49L5.20 0.49L4.00 2.71ZM0.80 4.19L3.20 4.19L2.00 6.41ZM2.80 6.91L5.20 6.91L4.00 4.69ZM4.80 3.21L7.20 3.21L6.00 0.99ZM6.80 0.49L9.20 0.49L8.00 2.71ZM4.80 4.19L7.20 4.19L6.00 6.41ZM6.80 6.91L9.20 6.91L8.00 4.69ZM-3.20 3.21L-0.80 3.21L-2.00 0.99ZM-1.20 0.49L1.20 0.49L0.00 2.71ZM-3.20 4.19L-0.80 4.19L-2.00 6.41ZM-1.20 6.91L1.20 6.91L0.00 4.69Z" fill="#767b84"/></pattern><linearGradient id="vlit" x1="448" y1="0" x2="535" y2="0" gradientUnits="userSpaceOnUse"><stop offset="0" stop-color="#fff" stop-opacity="0.1"/><stop offset="0.35" stop-color="#fff" stop-opacity="0.38"/><stop offset="0.65" stop-color="#fff" stop-opacity="0.72"/><stop offset="0.85" stop-color="#fff" stop-opacity="0.9"/><stop offset="1" stop-color="#fff" stop-opacity="0.75"/></linearGradient></defs>
<path d="M478.2 344.2C480.2 344.2 484.6 343.9 490 344.1C495.4 344.3 506.0 344.9 510.5 345.4C515.0 345.9 515.1 346.2 517 347C518.9 347.8 520.4 348.8 521.9 350.3C523.4 351.8 524.6 353.6 526 356C527.4 358.4 528.9 361.9 530 365C531.1 368.1 531.9 371.0 532.6 374.8C533.3 378.6 534.0 384.5 534.2 388C534.4 391.5 534.3 392.2 534 395.6C533.7 399.0 533.1 404.3 532.2 408.5C531.3 412.7 530.0 416.7 528.5 420.6C527.0 424.5 525.3 428.8 523 431.7C520.7 434.6 518.3 436.6 514.6 438.2C510.9 439.8 505.4 440.9 500.7 441.5C496.0 442.1 491.3 442.3 486.7 442C482.1 441.7 476.6 441.0 472.8 439.6C469.0 438.2 466.2 436.0 463.6 433.6C461.0 431.2 458.9 428.2 457 425.3C455.1 422.4 453.7 419.6 452.4 416C451.1 412.4 449.9 408.3 449.2 404C448.5 399.7 448.3 394.5 448.4 390C448.5 385.5 449.1 380.8 449.9 376.8C450.7 372.8 452.1 369.4 453.2 366.2C454.3 363.0 455.2 359.8 456.5 357.5C457.8 355.2 460.4 353.2 461.2 352.4L468.7 354.4L475.5 355Z" fill="#fafafa"/>
<path d="M478.2 344.2C480.2 344.2 484.6 343.9 490 344.1C495.4 344.3 506.0 344.9 510.5 345.4C515.0 345.9 515.1 346.2 517 347C518.9 347.8 520.4 348.8 521.9 350.3C523.4 351.8 524.6 353.6 526 356C527.4 358.4 528.9 361.9 530 365C531.1 368.1 531.9 371.0 532.6 374.8C533.3 378.6 534.0 384.5 534.2 388C534.4 391.5 534.3 392.2 534 395.6C533.7 399.0 533.1 404.3 532.2 408.5C531.3 412.7 530.0 416.7 528.5 420.6C527.0 424.5 525.3 428.8 523 431.7C520.7 434.6 518.3 436.6 514.6 438.2C510.9 439.8 505.4 440.9 500.7 441.5C496.0 442.1 491.3 442.3 486.7 442C482.1 441.7 476.6 441.0 472.8 439.6C469.0 438.2 466.2 436.0 463.6 433.6C461.0 431.2 458.9 428.2 457 425.3C455.1 422.4 453.7 419.6 452.4 416C451.1 412.4 449.9 408.3 449.2 404C448.5 399.7 448.3 394.5 448.4 390C448.5 385.5 449.1 380.8 449.9 376.8C450.7 372.8 452.1 369.4 453.2 366.2C454.3 363.0 455.2 359.8 456.5 357.5C457.8 355.2 460.4 353.2 461.2 352.4L468.7 354.4L475.5 355Z" fill="url(#holes)" opacity="0.75"/>
<path d="M478.2 344.2C480.2 344.2 484.6 343.9 490 344.1C495.4 344.3 506.0 344.9 510.5 345.4C515.0 345.9 515.1 346.2 517 347C518.9 347.8 520.4 348.8 521.9 350.3C523.4 351.8 524.6 353.6 526 356C527.4 358.4 528.9 361.9 530 365C531.1 368.1 531.9 371.0 532.6 374.8C533.3 378.6 534.0 384.5 534.2 388C534.4 391.5 534.3 392.2 534 395.6C533.7 399.0 533.1 404.3 532.2 408.5C531.3 412.7 530.0 416.7 528.5 420.6C527.0 424.5 525.3 428.8 523 431.7C520.7 434.6 518.3 436.6 514.6 438.2C510.9 439.8 505.4 440.9 500.7 441.5C496.0 442.1 491.3 442.3 486.7 442C482.1 441.7 476.6 441.0 472.8 439.6C469.0 438.2 466.2 436.0 463.6 433.6C461.0 431.2 458.9 428.2 457 425.3C455.1 422.4 453.7 419.6 452.4 416C451.1 412.4 449.9 408.3 449.2 404C448.5 399.7 448.3 394.5 448.4 390C448.5 385.5 449.1 380.8 449.9 376.8C450.7 372.8 452.1 369.4 453.2 366.2C454.3 363.0 455.2 359.8 456.5 357.5C457.8 355.2 460.4 353.2 461.2 352.4L468.7 354.4L475.5 355Z" fill="url(#vlit)"/>
<path d="M479.5 353C487 350.8 504 350.5 512 354C506 356.5 490 357 480.5 356.5Z" fill="#9a9ca1"/>
<path d="M479.5 353C487 350.8 504 350.5 512 354C504 352.3 488 352.3 481 354.5Z" fill="#55585e" opacity="0.8"/>
<path d="M62.2 528.3L62.2 550.3L78.7 551M62.2 550.3L75 546" stroke="#70757d" stroke-width="0.8" fill="none"/>
<path d="M90.5 106.3H94.5L92.5 108.8Z" fill="#1a2a5a"/>
<path d="M180 580V586M183 580L186.5 583L183 586" stroke="#c8c9ce" stroke-width="0.8" fill="none"/>
<rect x="4.6" y="593.5" width="8" height="8" fill="#fff" stroke="#555" stroke-width="0.8"/>
<path d="M6.1 597.5L8.1 599.5L11.3 595" stroke="#444" stroke-width="1" fill="none"/>
<rect x="33.7" y="593.5" width="8" height="8" fill="#fff" stroke="#555" stroke-width="0.8"/>
<rect x="66.1" y="593.5" width="8" height="8" fill="#fff" stroke="#555" stroke-width="0.8"/>
<path d="M67.6 597.5L69.6 599.5L72.8 595" stroke="#444" stroke-width="1" fill="none"/>
<rect x="100.1" y="593.5" width="8" height="8" fill="#fff" stroke="#555" stroke-width="0.8"/>
<path d="M101.6 597.5L103.6 599.5L106.8 595" stroke="#444" stroke-width="1" fill="none"/>
<rect x="129.8" y="593.5" width="8" height="8" fill="#fff" stroke="#555" stroke-width="0.8"/>
<path d="M131.3 597.5L133.3 599.5L136.5 595" stroke="#444" stroke-width="1" fill="none"/>
<rect x="159.1" y="593.5" width="8" height="8" fill="#fff" stroke="#555" stroke-width="0.8"/>
<path d="M160.6 597.5L162.6 599.5L165.79999999999998 595" stroke="#444" stroke-width="1" fill="none"/>
<rect x="184.1" y="593.5" width="8" height="8" fill="#fff" stroke="#555" stroke-width="0.8"/>
<path d="M185.6 597.5L187.6 599.5L190.79999999999998 595" stroke="#444" stroke-width="1" fill="none"/>
<rect x="216.1" y="593.5" width="8" height="8" fill="#fff" stroke="#555" stroke-width="0.8"/>
<path d="M217.6 597.5L219.6 599.5L222.79999999999998 595" stroke="#444" stroke-width="1" fill="none"/>
<rect x="244.5" y="593.5" width="8" height="8" fill="#fff" stroke="#555" stroke-width="0.8"/>
<path d="M246 597.5L248 599.5L251.2 595" stroke="#444" stroke-width="1" fill="none"/>
<rect x="279.2" y="593.5" width="8" height="8" fill="#fff" stroke="#555" stroke-width="0.8"/>
<path d="M280.7 597.5L282.7 599.5L285.9 595" stroke="#444" stroke-width="1" fill="none"/>
<rect x="311.4" y="593.5" width="8" height="8" fill="#fff" stroke="#555" stroke-width="0.8"/>
<rect x="349.8" y="593.5" width="8" height="8" fill="#e0e1e5" stroke="#d4d5d9" stroke-width="0.8"/>
<rect x="395.5" y="593.5" width="8" height="8" fill="#e0e1e5" stroke="#d4d5d9" stroke-width="0.8"/>
<rect x="932.5" y="587.5" width="4.5" height="4" fill="none" stroke="#8a8a8a" stroke-width="0.7"/><path d="M933.5 587.5V586.5H938V590.5H937" fill="none" stroke="#8a8a8a" stroke-width="0.7"/>
<rect x="962.5" y="586.5" width="5" height="5" fill="none" stroke="#8a8a8a" stroke-width="0.7"/>
<path d="M994 586.5L999 591.5M999 586.5L994 591.5" stroke="#8a8a8a" stroke-width="0.7"/>
</svg>
</body></html>
